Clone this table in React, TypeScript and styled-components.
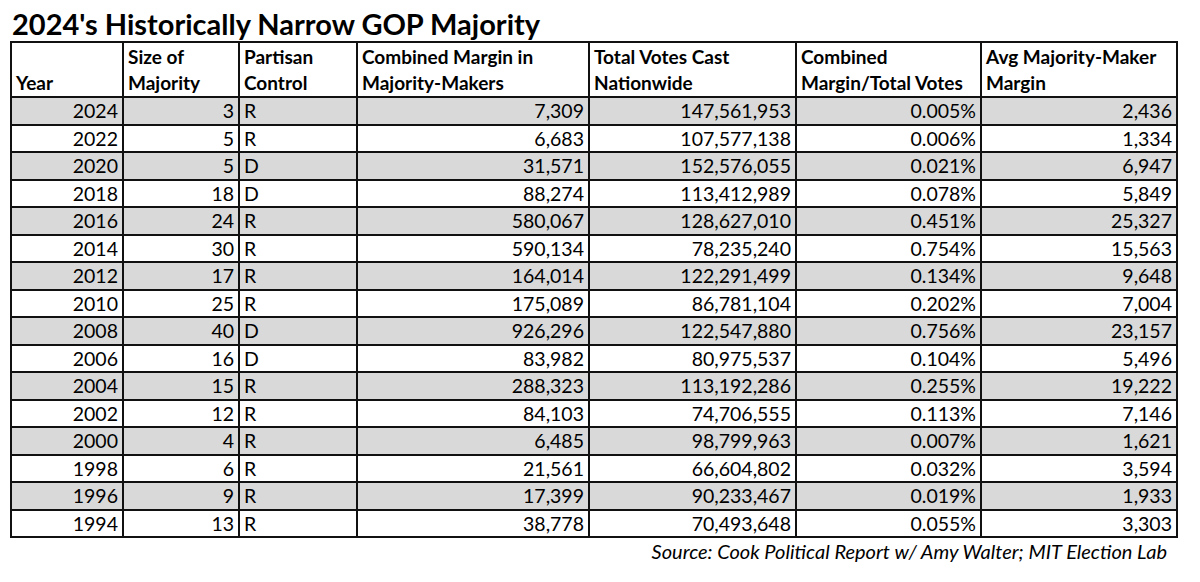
import React from "react";
import styled, { createGlobalStyle } from "styled-components";

const GlobalStyle = createGlobalStyle`
  html, body {
    margin: 0;
    padding: 0;
    background: #ffffff;
  }
  body {
    font-family: Lato, "Open Sans", "Liberation Sans", sans-serif;
    color: #000;
  }
  * { box-sizing: border-box; }
`;

const COLS = "112px 116px 118px 232px 207px 185px 196px";

const Page = styled.div`
  width: 1200px;
  height: 582px;
  padding-left: 10px;
  overflow: hidden;
`;

const Title = styled.h1`
  margin: 0;
  padding: 6px 0 0 2px;
  height: 41px;
  font-size: 29px;
  line-height: 35px;
  font-weight: 700;
  color: #000;
  white-space: nowrap;
`;

const Table = styled.div`
  width: 1168px;
  border-left: 2px solid #111;
  border-top: 2px solid #111;
`;

const HeaderRow = styled.div`
  display: grid;
  grid-template-columns: ${COLS};
  height: 55px;
  border-bottom: 2px solid #111;
`;

const HeaderCell = styled.div`
  display: flex;
  align-items: flex-end;
  padding: 0 4px 0 4px;
  border-right: 2px solid #111;
  font-size: 19px;
  font-weight: 700;
  line-height: 26px;
  white-space: nowrap;
`;

const Row = styled.div<{ $shade: boolean; $tall: boolean }>`
  display: grid;
  grid-template-columns: ${COLS};
  height: ${(p) => (p.$tall ? 28 : 27)}px;
  border-bottom: 2px solid #111;
  background: ${(p) => (p.$shade ? "#d9d9d9" : "#ffffff")};
`;

const Cell = styled.div<{ $align: "left" | "right" }>`
  display: flex;
  align-items: center;
  justify-content: ${(p) => (p.$align === "left" ? "flex-start" : "flex-end")};
  padding: 0 4px;
  border-right: 2px solid #111;
  font-size: 19.5px;
  line-height: 1;
  white-space: nowrap;
`;

const Source = styled.div`
  width: 1168px;
  padding: 1px 11px 0 0;
  text-align: right;
  font-size: 20px;
  font-style: italic;
  line-height: 24px;
  white-space: nowrap;
`;

const headers: React.ReactNode[] = [
  "Year",
  <>Size of<br />Majority</>,
  <>Partisan<br />Control</>,
  <>Combined Margin in<br />Majority-Makers</>,
  <>Total Votes Cast<br />Nationwide</>,
  <>Combined<br />Margin/Total Votes</>,
  <>Avg Majority-Maker<br />Margin</>,
];

const rows: string[][] = [
  ["2024", "3", "R", "7,309", "147,561,953", "0.005%", "2,436"],
  ["2022", "5", "R", "6,683", "107,577,138", "0.006%", "1,334"],
  ["2020", "5", "D", "31,571", "152,576,055", "0.021%", "6,947"],
  ["2018", "18", "D", "88,274", "113,412,989", "0.078%", "5,849"],
  ["2016", "24", "R", "580,067", "128,627,010", "0.451%", "25,327"],
  ["2014", "30", "R", "590,134", "78,235,240", "0.754%", "15,563"],
  ["2012", "17", "R", "164,014", "122,291,499", "0.134%", "9,648"],
  ["2010", "25", "R", "175,089", "86,781,104", "0.202%", "7,004"],
  ["2008", "40", "D", "926,296", "122,547,880", "0.756%", "23,157"],
  ["2006", "16", "D", "83,982", "80,975,537", "0.104%", "5,496"],
  ["2004", "15", "R", "288,323", "113,192,286", "0.255%", "19,222"],
  ["2002", "12", "R", "84,103", "74,706,555", "0.113%", "7,146"],
  ["2000", "4", "R", "6,485", "98,799,963", "0.007%", "1,621"],
  ["1998", "6", "R", "21,561", "66,604,802", "0.032%", "3,594"],
  ["1996", "9", "R", "17,399", "90,233,467", "0.019%", "1,933"],
  ["1994", "13", "R", "38,778", "70,493,648", "0.055%", "3,303"],
];

export default function App() {
  return (
    <Page>
      <GlobalStyle />
      <Title>2024's Historically Narrow GOP Majority</Title>
      <Table>
        <HeaderRow>
          {headers.map((h, i) => (
            <HeaderCell key={i}>
              <span>{h}</span>
            </HeaderCell>
          ))}
        </HeaderRow>
        {rows.map((r, i) => (
          <Row key={r[0]} $shade={i % 2 === 0} $tall={i % 2 === 0}>
            {r.map((v, j) => (
              <Cell key={j} $align={j === 2 ? "left" : "right"}>
                {v}
              </Cell>
            ))}
          </Row>
        ))}
      </Table>
      <Source>Source: Cook Political Report w/ Amy Walter; MIT Election Lab</Source>
    </Page>
  );
}
